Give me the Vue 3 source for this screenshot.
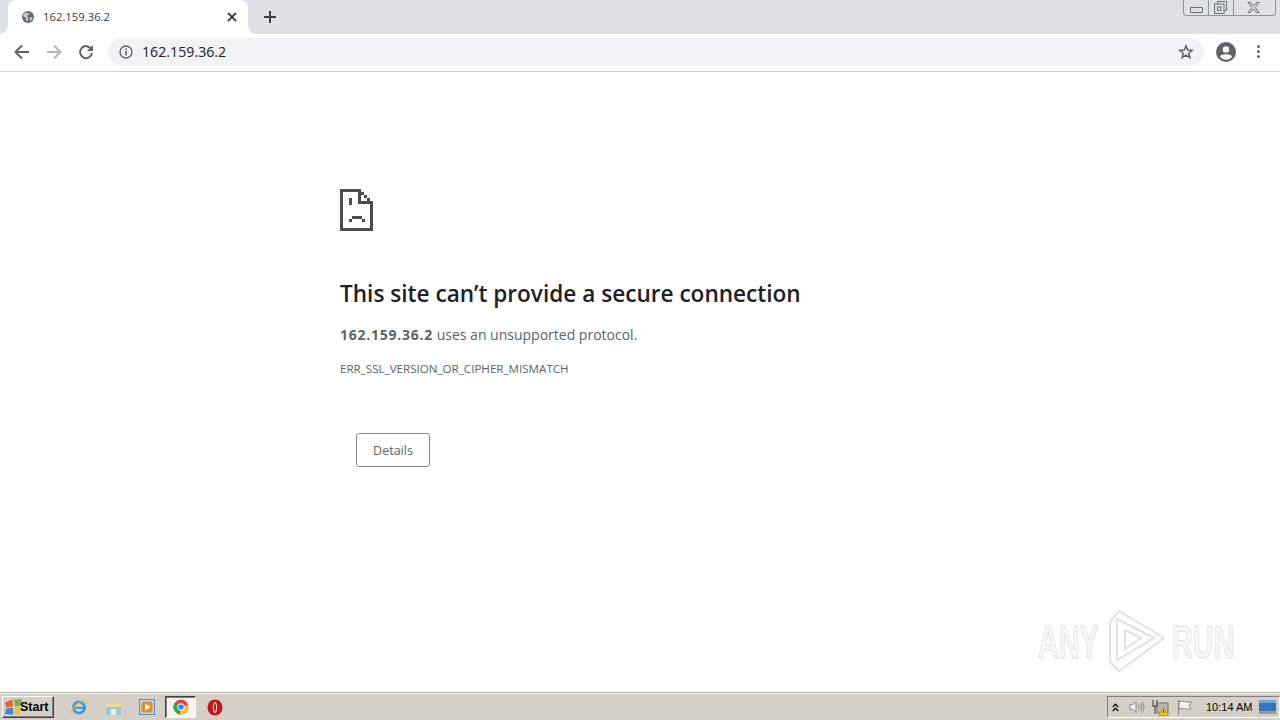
<script setup>
const quick = [
  { id: 'ie' }, { id: 'folder' }, { id: 'media' }, { id: 'chrome', active: true }, { id: 'opera' }
]
</script>

<template>
  <div class="screen">
    <header class="tabstrip">
      <div class="tab">
        <svg class="globe" width="12" height="12" viewBox="0 0 12 12">
          <circle cx="6" cy="6" r="6" fill="#6a6e73" />
          <path d="M2 2.5 L5.5 1.5 L7 3 L5 5 L6.5 7 L5.5 10.5 L4 9 L3.6 6.6 L1 5 Z M8 6 L10.8 6.5 L9 10 L7.6 9 Z" fill="#c9ccd0" />
        </svg>
        <span class="tabtitle">162.159.36.2</span>
        <svg class="tabclose" width="10" height="10" viewBox="0 0 10 10">
          <path d="M1 1 L9 9 M9 1 L1 9" stroke="#3c4043" stroke-width="1.8" />
        </svg>
      </div>
      <svg class="newtab" width="14" height="14" viewBox="0 0 14 14">
        <path d="M7 1 V13 M1 7 H13" stroke="#3c4043" stroke-width="2" />
      </svg>
      <div class="winctrls">
        <div class="wc wc-min"><span class="minbar"></span></div>
        <div class="wc wc-max">
          <svg width="13" height="13" viewBox="0 0 13 13" fill="none" stroke="#6b7078">
            <path d="M3.5 3 V.5 H12.5 V9.5 H10" />
            <rect x=".5" y="3" width="9.5" height="9.5" />
            <rect x="3.5" y="6" width="3.5" height="3.5" />
          </svg>
        </div>
        <div class="wc wc-close">
          <svg width="13" height="11" viewBox="0 0 13 11" fill="none" stroke="#6b7078" stroke-width="1">
            <path d="M1 .5 H3.5 L6.5 4 L9.5 .5 H12 L8 5.5 L12 10.5 H9.5 L6.5 7 L3.5 10.5 H1 L5 5.5 Z" />
          </svg>
        </div>
      </div>
    </header>

    <nav class="toolbar">
      <svg class="tb back" width="16" height="16" viewBox="0 0 16 16" fill="none" stroke="#5f6368" stroke-width="2">
        <path d="M15 8 H2 M8 1.5 L1.5 8 L8 14.5" />
      </svg>
      <svg class="tb forward" width="16" height="16" viewBox="0 0 16 16" fill="none" stroke="#b4b7bb" stroke-width="2">
        <path d="M1 8 H14 M8 1.5 L14.5 8 L8 14.5" />
      </svg>
      <svg class="tb reload" width="16" height="16" viewBox="0 0 16 16" fill="none">
        <path d="M13.2 5 A6 6 0 1 0 14 9" stroke="#5f6368" stroke-width="2" />
        <path d="M15 1 V7 H9 Z" fill="#5f6368" />
      </svg>
      <div class="omnibox">
        <svg class="info" width="14" height="14" viewBox="0 0 14 14" fill="none">
          <circle cx="7" cy="7" r="6" stroke="#5f6368" stroke-width="1.4" />
          <path d="M7 6 V10.5 M7 3.4 V5" stroke="#5f6368" stroke-width="1.6" />
        </svg>
        <span class="url">162.159.36.2</span>
        <svg class="star" width="16" height="16" viewBox="0 0 16 16" fill="none">
          <path d="M8 1.9 L9.7 6 L14.2 6.3 L10.8 9.2 L11.9 13.6 L8 11.2 L4.1 13.6 L5.2 9.2 L1.8 6.3 L6.3 6 Z" stroke="#5f6368" stroke-width="1.5" />
        </svg>
      </div>
      <svg class="avatar" width="20" height="20" viewBox="0 0 20 20">
        <circle cx="10" cy="10" r="10" fill="#5f6368" />
        <circle cx="10" cy="7.4" r="3.2" fill="#fff" />
        <path d="M3.8 14.6 C5.5 11.6 14.5 11.6 16.2 14.6 C14.5 17 12 17.8 10 17.8 C8 17.8 5.5 17 3.8 14.6 Z" fill="#fff" />
      </svg>
      <div class="menu"><i></i><i></i><i></i></div>
    </nav>

    <main class="page">
      <div class="error">
        <svg class="sadfile" width="33" height="42" viewBox="0 0 33 42" shape-rendering="crispEdges" fill="#4c4c4c">
          <rect x="0" y="0" width="3" height="42" />
          <rect x="0" y="0" width="21" height="3" />
          <rect x="0" y="39" width="33" height="3" />
          <rect x="30" y="12" width="3" height="30" />
          <rect x="18" y="0" width="3" height="15" />
          <rect x="18" y="12" width="15" height="3" />
          <rect x="21" y="3" width="3" height="3" />
          <rect x="24" y="6" width="3" height="3" />
          <rect x="27" y="9" width="3" height="3" />
          <rect x="9" y="9" width="3" height="7" />
          <rect x="12" y="27" width="10" height="3" />
          <rect x="9" y="30" width="3" height="3" />
          <rect x="22" y="30" width="3" height="3" />
        </svg>
        <h1>This site can’t provide a secure connection</h1>
        <p class="desc"><strong>162.159.36.2</strong> uses an unsupported protocol.</p>
        <p class="code">ERR_SSL_VERSION_OR_CIPHER_MISMATCH</p>
        <button class="details">Details</button>
      </div>

      <div class="watermark">
        <span class="wm-word">ANY</span>
        <svg class="wm-logo" width="58" height="62" viewBox="0 0 58 62" fill="none" stroke="#e2e2e2" stroke-width="2">
          <path d="M2 12 L11 1 L56 28 L11 61 L2 52 Z" />
          <path d="M9 9 V50 L46 28 Z" />
          <path d="M17 20 V39 L33 28 Z" />
        </svg>
        <span class="wm-word">RUN</span>
      </div>
    </main>

    <footer class="taskbar">
      <button class="start">
        <svg width="19" height="18" viewBox="0 0 19 18">
          <path d="M1 4.5 L8.5 1.5 L9 8.5 L2 9.5 Z" fill="#e8672b" />
          <path d="M10 1.5 L18 1 L17 7.5 L10.8 8.5 Z" fill="#7db343" />
          <path d="M2 10.5 L9 9.5 L9 16.5 L1 16 Z" fill="#3f86d8" />
          <path d="M10.5 9.5 L17 8.5 L16 16 L10.5 16.5 Z" fill="#eec02f" />
        </svg>
        <span>Start</span>
      </button>
      <div class="quick">
        <div v-for="q in quick" :key="q.id" class="qitem" :class="{ active: q.active }">
          <svg v-if="q.id === 'ie'" width="18" height="18" viewBox="0 0 18 18" fill="none">
            <circle cx="9" cy="9.5" r="5.6" stroke="#3b9ad9" stroke-width="2.6" />
            <path d="M4 9.8 H14" stroke="#3b9ad9" stroke-width="2" />
            <path d="M2 15 C0 11 9 3 15 1.5 C17 1.5 17 4 15.5 6" stroke="#e9b93a" stroke-width="1.2" />
          </svg>
          <svg v-else-if="q.id === 'folder'" width="17" height="17" viewBox="0 0 17 17">
            <path d="M2 4 H7 L8 2 H14 V5 H2 Z" fill="#e6d28c" />
            <rect x="1" y="5" width="15" height="11" fill="#9cc7d6" />
            <rect x="1" y="5" width="15" height="3" fill="#ecd89a" />
            <rect x="6" y="10" width="5" height="6" fill="#f4f0d8" />
          </svg>
          <svg v-else-if="q.id === 'media'" width="16" height="16" viewBox="0 0 16 16">
            <rect x=".5" y=".5" width="15" height="15" fill="#bcd2e8" stroke="#5f8db8" />
            <rect x="2.5" y="2.5" width="11" height="11" rx="2" fill="#ec8a1c" />
            <path d="M6 4.6 L11.4 8 L6 11.4 Z" fill="#fff" />
          </svg>
          <svg v-else-if="q.id === 'chrome'" width="16" height="16" viewBox="0 0 16 16">
            <circle cx="8" cy="8" r="7.5" fill="#e0453a" />
            <path d="M8 8 L1.3 4.2 A7.5 7.5 0 0 0 7 15.4 Z" fill="#34a853" />
            <path d="M8 8 L15.2 6 A7.5 7.5 0 0 1 7 15.4 Z" fill="#f6c12f" />
            <circle cx="8" cy="8" r="3.7" fill="#fff" />
            <circle cx="8" cy="8" r="2.8" fill="#4285f4" />
          </svg>
          <svg v-else width="16" height="17" viewBox="0 0 16 17">
            <ellipse cx="8" cy="8.5" rx="7.5" ry="8" fill="#c8151b" />
            <ellipse cx="8" cy="8.5" rx="2.2" ry="5.6" fill="#f3d9d9" />
            <ellipse cx="8" cy="8.5" rx="1" ry="4" fill="#c8151b" />
          </svg>
        </div>
      </div>
      <div class="tray">
        <svg class="t-up" width="7" height="9" viewBox="0 0 7 9" fill="none" stroke="#111" stroke-width="1.4">
          <path d="M.7 4 L3.5 1.2 L6.3 4 M.7 8 L3.5 5.2 L6.3 8" />
        </svg>
        <svg class="t-sound" width="16" height="14" viewBox="0 0 16 14" fill="none" stroke="#8d8d8d">
          <path d="M1 4.5 H4 L7 1.5 V12.5 L4 9.5 H1 Z" fill="#eeeeee" />
          <path d="M9.5 4.5 Q11 7 9.5 9.5 M11.5 3 Q14 7 11.5 11 M13.5 1.5 Q16.5 7 13.5 12.5" />
        </svg>
        <svg class="t-net" width="17" height="17" viewBox="0 0 17 17">
          <rect x="5" y="4" width="11" height="10" fill="#b9b6ae" stroke="#77746c" />
          <path d="M1 1 V7 H5 V1 M3 7 V15" fill="none" stroke="#5b5b55" stroke-width="1.3" />
          <path d="M11.5 8 L16.5 16.5 H6.5 Z" fill="#f2c21b" stroke="#a8831a" stroke-width=".6" />
          <rect x="11" y="11" width="1" height="3" fill="#222" />
        </svg>
        <svg class="t-flag" width="16" height="15" viewBox="0 0 16 15" fill="#f2f2f0" stroke="#8b8b85">
          <path d="M1.5 0 V15" />
          <path d="M2 1.5 C6 0 9 3 14.5 2 L12 6 L14 9 C9 10 6 7.5 2 9 Z" />
        </svg>
        <span class="clock">10:14 AM</span>
        <svg class="t-desk" width="17" height="14" viewBox="0 0 17 14">
          <rect x="0" y="0" width="17" height="11" fill="#2f76be" />
          <rect x="0" y="0" width="17" height="3" fill="#6ea8dc" />
          <rect x="0" y="11" width="17" height="3" fill="#9a9a94" />
        </svg>
      </div>
    </footer>
  </div>
</template>

<style>
html, body { margin: 0; background: #fff; overflow: hidden; }
</style>

<style scoped>
.screen {
  width: 1280px;
  height: 720px;
  display: flex;
  flex-direction: column;
  font-family: "Open Sans", "Noto Sans", sans-serif;
  overflow: hidden;
}
.tabstrip {
  height: 34px;
  background: #dee1e6;
  display: flex;
  align-items: flex-start;
  padding-left: 8px;
  flex: none;
}
.tab {
  width: 240px;
  height: 34px;
  background: #fff;
  border-radius: 8px 8px 0 0;
  display: flex;
  align-items: center;
  box-sizing: border-box;
  padding: 0 11px 0 14px;
  position: relative;
}
.tab::before, .tab::after {
  content: "";
  position: absolute;
  bottom: 0;
  width: 8px;
  height: 8px;
  background: radial-gradient(circle at 0 0, #dee1e6 7.5px, #fff 8px);
}
.tab::before { left: -8px; }
.tab::after { right: -8px; background: radial-gradient(circle at 100% 0, #dee1e6 7.5px, #fff 8px); }
.tabtitle { margin: -2px 0 0 9px; font-size: 11.3px; color: #3c4043; flex: 1; }
.globe { margin-top: -1px; }
.tabclose { margin-top: -1px; }
.newtab { margin: 10px 0 0 15px; }
.winctrls {
  margin-left: auto;
  margin-right: 4px;
  width: 93px;
  height: 16px;
  display: flex;
  border: 1px solid #8f949b;
  border-top: none;
  border-radius: 0 0 4px 4px;
  box-sizing: border-box;
}
.wc { display: flex; align-items: center; justify-content: center; }
.wc-min { width: 24px; border-right: 1px solid #8f949b; }
.wc-max { width: 25px; border-right: 1px solid #8f949b; padding-right: 1px; box-sizing: border-box; }
.wc-close { flex: 1; padding-right: 2px; }
.minbar { width: 11px; height: 4px; border: 1px solid #6b7078; border-radius: 1px; margin-top: 5px; }
.toolbar {
  height: 38px;
  box-sizing: border-box;
  padding-bottom: 2px;
  border-bottom: 1px solid #d4d4d4;
  background: #fff;
  display: flex;
  align-items: center;
  flex: none;
}
.tb { flex: none; }
.back { margin-left: 14px; }
.forward { margin-left: 16px; }
.reload { margin-left: 16px; }
.omnibox {
  margin-left: 14px;
  width: 1096px;
  height: 28px;
  border-radius: 14px;
  background: #f1f3f4;
  display: flex;
  align-items: center;
  box-sizing: border-box;
  padding: 0 10px 0 11px;
}
.url { margin-left: 9px; font-size: 14.2px; color: #202124; flex: 1; }
.avatar { margin-left: 12px; flex: none; }
.menu { margin-left: 21px; display: flex; flex-direction: column; gap: 2px; }
.menu i { width: 3px; height: 3px; background: #5f6368; border-radius: 50%; display: block; }
.page { flex: 1; position: relative; background: #fff; }
.error { margin-left: 340px; padding-top: 117px; width: 600px; }
.sadfile { display: block; }
h1 {
  margin: 47px 0 0;
  font-size: 22.6px;
  line-height: 32px;
  font-weight: 600;
  color: #202124;
}
.desc { margin: 15px 0 0; font-size: 14px; line-height: 20px; color: #5f6368; }
.desc strong { font-weight: 700; letter-spacing: .75px; }
.code { margin: 16px 0 0; font-size: 11.6px; line-height: 16px; color: #5f6368; }
.details {
  display: block;
  margin: 56px 0 0 16px;
  width: 74px;
  height: 34px;
  background: #fff;
  border: 1px solid #8a8d91;
  border-radius: 3px;
  font: 12.5px "Open Sans", sans-serif;
  color: #5f6368;
  padding: 0;
}
.watermark {
  position: absolute;
  left: 1038px;
  top: 538px;
  width: 194px;
  height: 62px;
  display: flex;
  align-items: center;
  color: #f7f7f7;
  font: 700 47px/1 "Liberation Sans", sans-serif;
  -webkit-text-stroke: 1px #e2e2e2;
  pointer-events: none;
}
.wm-word {
  display: block;
  width: 62px;
  white-space: nowrap;
  transform: scaleX(.61);
  transform-origin: left center;
}
.wm-logo { margin: 0 6px 0 8px; flex: none; }
.taskbar {
  height: 28px;
  flex: none;
  background: #d4d0c8;
  border-top: 1px solid #b8b5ae;
  box-shadow: inset 0 1px 0 #f6f5f2;
  box-sizing: border-box;
  display: flex;
  align-items: center;
  padding-top: 1px;
}
.start {
  margin-left: 2px;
  width: 52px;
  height: 22px;
  display: flex;
  align-items: center;
  gap: 0;
  padding: 0 0 0 1px;
  background: #d4d0c8;
  border: 1px solid;
  border-color: #fff #404040 #404040 #fff;
  box-shadow: inset -1px -1px 0 #808080;
  font: 700 12.5px "Liberation Sans", sans-serif;
  color: #000;
  box-sizing: border-box;
}
.start svg { margin-right: -3px; flex: none; }
.quick { display: flex; align-items: center; margin-left: 8px; }
.qitem {
  width: 34px;
  height: 22px;
  display: flex;
  align-items: center;
  justify-content: center;
  box-sizing: border-box;
}
.qitem.active {
  width: 31px;
  margin: 0 2px 0 1px;
  background: #f5f4f1;
  border: 1px solid;
  border-color: #404040 #fff #fff #404040;
  box-shadow: inset 1px 1px 0 #808080;
}
.tray {
  margin-left: auto;
  width: 173px;
  height: 22px;
  box-sizing: border-box;
  border: 1px solid;
  border-color: #808080 #fff #fff #808080;
  display: flex;
  align-items: center;
}
.t-up { margin-left: 4px; }
.t-sound { margin-left: 10px; }
.t-net { margin-left: 7px; }
.t-flag { margin-left: 8px; }
.clock { margin-left: 13px; font: 11px "Liberation Sans", sans-serif; color: #000; white-space: nowrap; }
.t-desk { margin-left: 7px; }
</style>
